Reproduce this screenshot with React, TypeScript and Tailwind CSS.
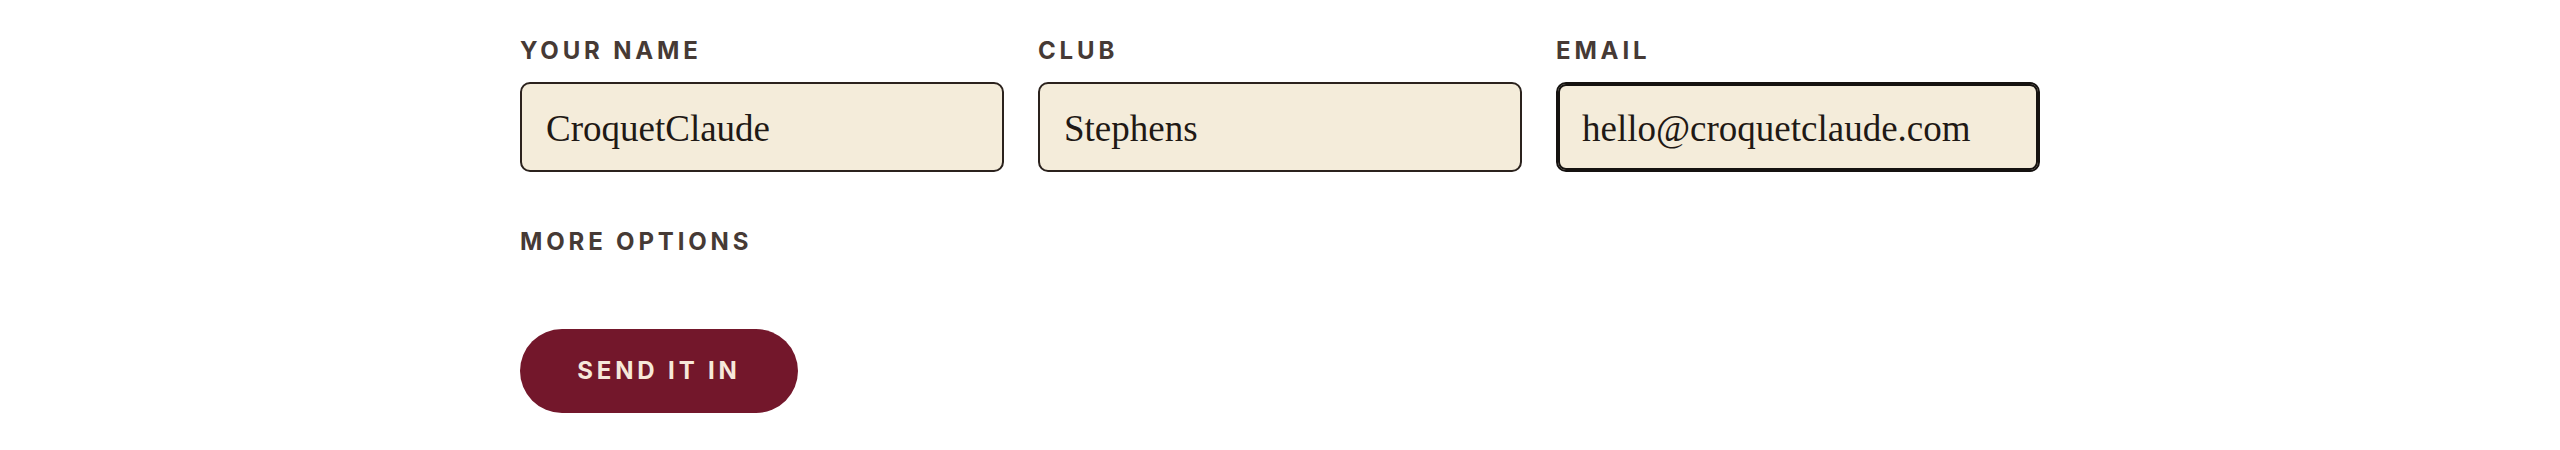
import { useState } from "react";

interface Field {
  id: string;
  label: string;
  value: string;
  focused?: boolean;
}

const FIELDS: Field[] = [
  { id: "name", label: "Your name", value: "CroquetClaude" },
  { id: "club", label: "Club", value: "Stephens" },
  { id: "email", label: "Email", value: "hello@croquetclaude.com", focused: true },
];

export default function App() {
  const [values, setValues] = useState<Record<string, string>>(
    Object.fromEntries(FIELDS.map((f) => [f.id, f.value]))
  );

  return (
    <div className="w-full h-[450px] bg-white font-['Inter',sans-serif]">
      <form
        className="mx-auto w-[1520px] pt-[39px]"
        onSubmit={(e) => e.preventDefault()}
      >
        <div className="grid grid-cols-3 gap-x-[34px]">
          {FIELDS.map((field) => (
            <label key={field.id} className="flex flex-col">
              <span className="text-[24px] leading-[24px] font-bold uppercase tracking-[0.16em] text-[#463a35]">
                {field.label}
              </span>
              <input
                value={values[field.id]}
                onChange={(e) =>
                  setValues({ ...values, [field.id]: e.target.value })
                }
                className={`mt-[19px] h-[90px] rounded-[10px] border-2 bg-[#f4ecda] px-[24px] pt-[3px] text-[37px] text-[#1f1915] font-['Liberation_Serif',serif] outline-none ${
                  field.focused
                    ? "border-[#151210] ring-2 ring-inset ring-[#151210]"
                    : "border-[#2b221d]"
                }`}
              />
            </label>
          ))}
        </div>

        <div className="mt-[58px] text-[24px] leading-[24px] font-bold uppercase tracking-[0.16em] text-[#463a35]">
          More options
        </div>

        <button
          type="submit"
          className="mt-[75px] flex h-[84px] w-[278px] items-center justify-center rounded-full bg-[#73172b] text-[24px] leading-[24px] font-bold uppercase tracking-[0.16em] text-[#f6e8da]"
        >
          Send it in
        </button>
      </form>
    </div>
  );
}
